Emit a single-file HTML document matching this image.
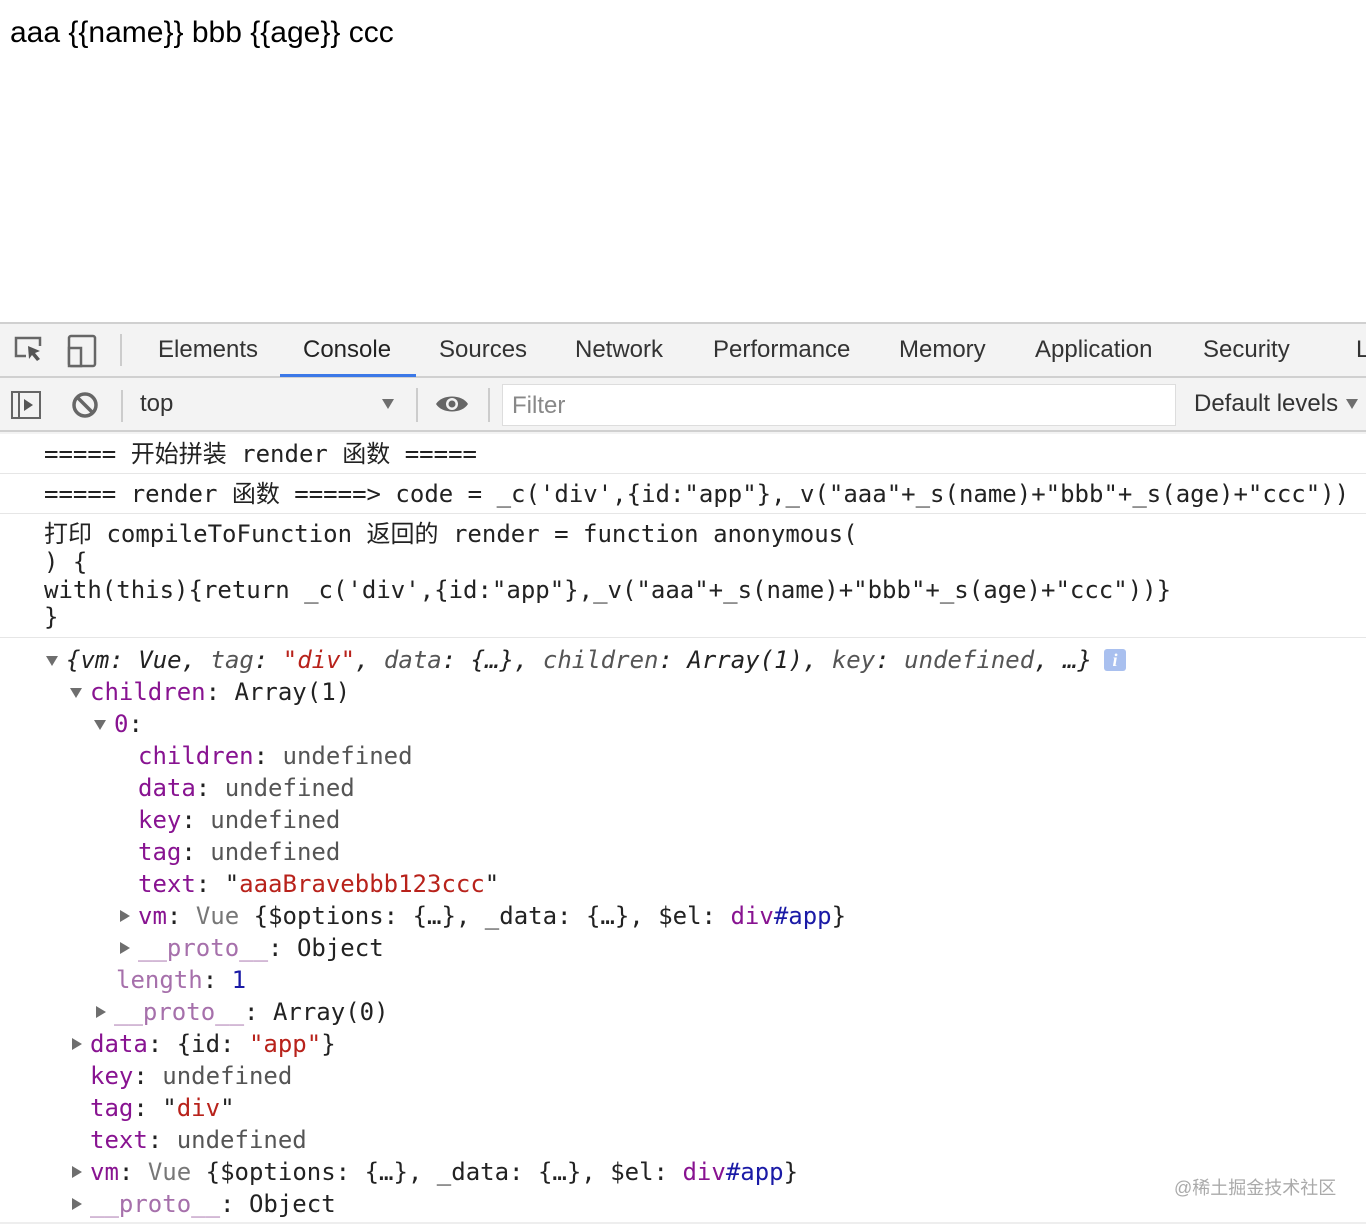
<!DOCTYPE html>
<html><head><meta charset="utf-8"><style>
body{margin:0;width:1366px;height:1228px;background:#fff;position:relative;overflow:hidden;font-family:"Liberation Sans","Noto Sans CJK SC",sans-serif}
.a{position:absolute}
.m{position:absolute;font-family:"DejaVu Sans Mono","Noto Sans CJK SC",monospace;font-size:24px;line-height:32px;height:32px;white-space:pre;color:#222}
.p{color:#881391}.r{color:#b8221b}.b{color:#1a1aa6}.g{color:#555}.f{color:#a670ab}
.t{position:absolute;width:0;height:0;border-left:6px solid transparent;border-right:6px solid transparent;border-top:10px solid #6e6e6e}
.tr{position:absolute;width:0;height:0;border-top:6px solid transparent;border-bottom:6px solid transparent;border-left:10px solid #6e6e6e}
.tab{position:absolute;top:336px;font-size:24px;color:#333;line-height:28px}
</style></head><body>
<div class="a" style="left:10px;top:16px;font-size:30px;color:#000">aaa {{name}} bbb {{age}} ccc</div>

<div class="a" style="left:0;top:322px;width:1366px;height:110px;background:#f3f3f3;border-top:2px solid #d0d0d0"></div>
<div class="a" style="left:0;top:376px;width:1366px;height:2px;background:#d0d0d0"></div>
<div class="a" style="left:0;top:430px;width:1366px;height:2px;background:#d0d0d0"></div>
<svg class="a" style="left:12px;top:334px" width="90" height="34"><path d="M14 22H4V4h24v8" stroke="#666" stroke-width="2.5" fill="none"/><path d="M16 12l12 5-5 2 5 6-3 2-5-6-3 4z" fill="#555"/><rect x="57" y="2" width="26" height="30" rx="2" stroke="#666" stroke-width="2.5" fill="none"/><rect x="57" y="14" width="12" height="18" stroke="#666" stroke-width="2.5" fill="#f3f3f3"/></svg>
<div class="a" style="left:120px;top:334px;width:2px;height:32px;background:#ccc"></div>
<div class="tab" style="left:158px">Elements</div>
<div class="tab" style="left:303px;color:#222">Console</div>
<div class="a" style="left:280px;top:374px;width:136px;height:3px;background:#3b78e7"></div>
<div class="tab" style="left:439px">Sources</div>
<div class="tab" style="left:575px">Network</div>
<div class="tab" style="left:713px">Performance</div>
<div class="tab" style="left:899px">Memory</div>
<div class="tab" style="left:1035px">Application</div>
<div class="tab" style="left:1203px">Security</div>
<div class="tab" style="left:1356px">L</div>

<svg class="a" style="left:10px;top:390px" width="90" height="30"><rect x="2" y="2" width="28" height="26" stroke="#666" stroke-width="2" fill="none"/><line x1="9" y1="2" x2="9" y2="28" stroke="#666" stroke-width="2"/><path d="M14 9l9 6-9 6z" fill="#555"/><circle cx="75" cy="15" r="11" stroke="#666" stroke-width="3.5" fill="none"/><line x1="67" y1="7" x2="83" y2="23" stroke="#666" stroke-width="3.5"/></svg>
<div class="a" style="left:121px;top:390px;width:2px;height:32px;background:#ccc"></div>
<div class="a" style="left:140px;top:390px;font-size:24px;color:#333">top</div>
<div class="t" style="left:382px;top:399px"></div>
<div class="a" style="left:416px;top:388px;width:2px;height:34px;background:#ccc"></div>
<svg class="a" style="left:434px;top:392px" width="36" height="24"><path d="M2 12C8 2 28 2 34 12 28 22 8 22 2 12z" fill="#666"/><circle cx="18" cy="12" r="6" fill="#f3f3f3"/><circle cx="18" cy="12" r="3.5" fill="#666"/></svg>
<div class="a" style="left:488px;top:388px;width:2px;height:34px;background:#ccc"></div>
<div class="a" style="left:502px;top:384px;width:672px;height:40px;background:#fff;border:1px solid #ddd"></div>
<div class="a" style="left:512px;top:392px;font-size:24px;color:#888">Filter</div>
<div class="a" style="left:1194px;top:390px;font-size:24px;color:#333">Default levels</div>
<div class="t" style="left:1346px;top:399px"></div>

<div class="m" style="left:44px;top:438px">===== 开始拼装 render 函数 =====</div>
<div class="a" style="left:0;top:473px;width:1366px;height:1px;background:#e6e6e6"></div>
<div class="m" style="left:44px;top:478px">===== render 函数 =====&gt; code = _c('div',{id:"app"},_v("aaa"+_s(name)+"bbb"+_s(age)+"ccc"))</div>
<div class="a" style="left:0;top:513px;width:1366px;height:1px;background:#e6e6e6"></div>
<div class="m" style="left:44px;top:518px">打印 compileToFunction 返回的 render = function anonymous(</div>
<div class="m" style="left:44px;top:546px">) {</div>
<div class="m" style="left:44px;top:574px">with(this){return _c('div',{id:"app"},_v("aaa"+_s(name)+"bbb"+_s(age)+"ccc"))}</div>
<div class="m" style="left:44px;top:601px">}</div>
<div class="a" style="left:0;top:637px;width:1366px;height:1px;background:#e6e6e6"></div>

<div class="t" style="left:46px;top:656px"></div>
<div class="m" style="left:66px;top:644px;font-style:italic">{vm: Vue, <span class="g">tag</span>: <span class="r">"div"</span>, <span class="g">data</span>: {…}, <span class="g">children</span>: Array(1), <span class="g">key</span>: <span class="g">undefined</span>, …}</div>
<div class="a" style="left:1104px;top:649px;width:22px;height:22px;background:#a9c0ef;border-radius:3px;color:#fff;font-style:italic;font-size:18px;text-align:center;line-height:22px;font-family:'Liberation Serif',serif;font-weight:bold">i</div>
<div class="t" style="left:70px;top:688px"></div>
<div class="m" style="left:90px;top:676px"><span class="p">children</span>: Array(1)</div>
<div class="t" style="left:94px;top:720px"></div>
<div class="m" style="left:114px;top:708px"><span class="p">0</span>:</div>
<div class="m" style="left:138px;top:740px"><span class="p">children</span>: <span class="g">undefined</span></div>
<div class="m" style="left:138px;top:772px"><span class="p">data</span>: <span class="g">undefined</span></div>
<div class="m" style="left:138px;top:804px"><span class="p">key</span>: <span class="g">undefined</span></div>
<div class="m" style="left:138px;top:836px"><span class="p">tag</span>: <span class="g">undefined</span></div>
<div class="m" style="left:138px;top:868px"><span class="p">text</span>: "<span class="r">aaaBravebbb123ccc</span>"</div>
<div class="tr" style="left:120px;top:910px"></div>
<div class="m" style="left:138px;top:900px"><span class="p">vm</span>: <span style="color:#777">Vue</span> {$options: {…}, _data: {…}, $el: <span class="p">div</span><span class="b">#app</span>}</div>
<div class="tr" style="left:120px;top:942px"></div>
<div class="m" style="left:138px;top:932px"><span class="f">__proto__</span>: Object</div>
<div class="m" style="left:116px;top:964px"><span class="f">length</span>: <span class="b">1</span></div>
<div class="tr" style="left:96px;top:1006px"></div>
<div class="m" style="left:114px;top:996px"><span class="f">__proto__</span>: Array(0)</div>
<div class="tr" style="left:72px;top:1038px"></div>
<div class="m" style="left:90px;top:1028px"><span class="p">data</span>: {id: <span class="r">"app"</span>}</div>
<div class="m" style="left:90px;top:1060px"><span class="p">key</span>: <span class="g">undefined</span></div>
<div class="m" style="left:90px;top:1092px"><span class="p">tag</span>: "<span class="r">div</span>"</div>
<div class="m" style="left:90px;top:1124px"><span class="p">text</span>: <span class="g">undefined</span></div>
<div class="tr" style="left:72px;top:1166px"></div>
<div class="m" style="left:90px;top:1156px"><span class="p">vm</span>: <span style="color:#777">Vue</span> {$options: {…}, _data: {…}, $el: <span class="p">div</span><span class="b">#app</span>}</div>
<div class="tr" style="left:72px;top:1198px"></div>
<div class="m" style="left:90px;top:1188px"><span class="f">__proto__</span>: Object</div>
<div class="a" style="left:1174px;top:1174px;font-size:18px;color:#aaa">@稀土掘金技术社区</div>
<div class="a" style="left:0;top:1222px;width:1366px;height:2px;background:#eee"></div>
</body></html>
